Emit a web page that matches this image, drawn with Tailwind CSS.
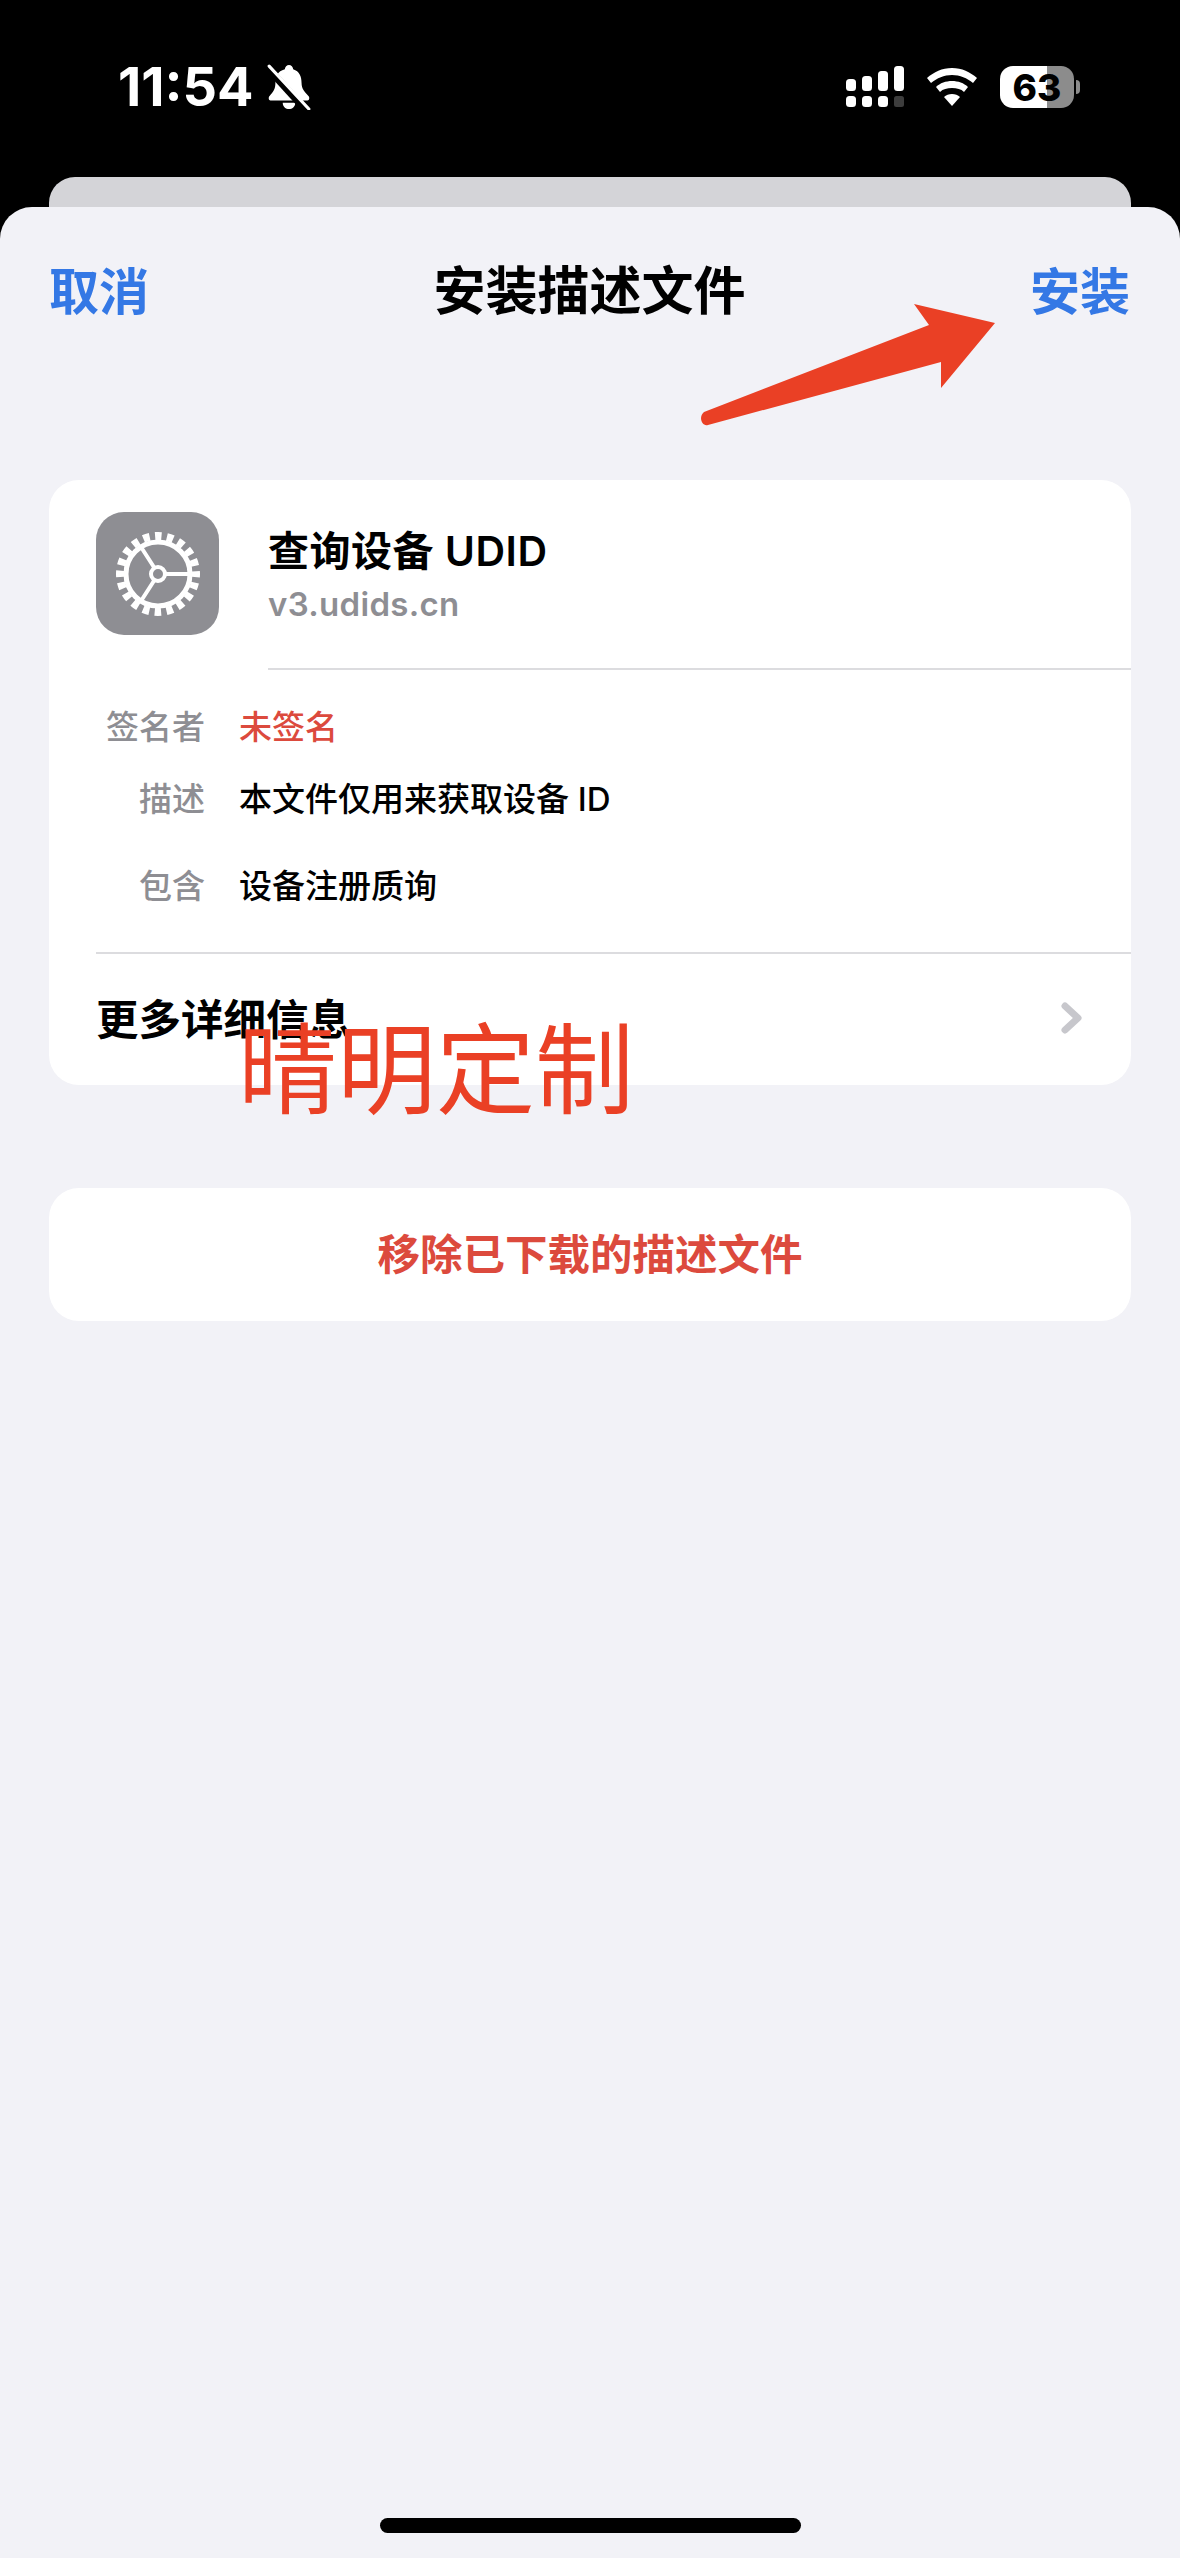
<!DOCTYPE html>
<html lang="zh">
<head>
  <meta charset="UTF-8">
  <title>安装描述文件</title>
  <script src="https://cdn.jsdelivr.net/npm/@tailwindcss/browser@4"></script>
</head>
<body class="bg-black font-['Inter','Noto_Sans_CJK_SC',sans-serif]">
  <div class="relative flex flex-col h-[2558px] w-[1180px] overflow-hidden">

    <!-- status bar -->
    <div class="h-[177px] shrink-0 flex items-start justify-between pt-[62px] pl-[118px] pr-[98px] text-white">
      <div class="flex items-center gap-[13px] h-[50px]">
        <span class="font-['Inter'] font-bold text-[54px] leading-none">11:54</span>
        <svg class="w-[44px] h-[46px]" viewBox="0 0 42 44">
          <path fill="#fff" d="M21 1c2 0 4 2 4 4 6 2 8 7 8 13 0 6 3 9 7 13 1 2 0 4-2 4H4c-2 0-3-2-2-4 4-4 6-7 6-13 0-6 2-11 9-13 0-2 2-4 4-4zM15 37h12c0 4-3 6-6 6s-6-2-6-6z"/>
          <path stroke="#000" stroke-width="7" d="M-1 2l40 44"/>
          <path stroke="#fff" stroke-width="3" stroke-linecap="round" d="M2 2l38 41"/>
        </svg>
      </div>
      <div class="flex items-center gap-[23px] h-[50px] mr-[2px]">
        <svg class="w-[58px] h-[42px]" viewBox="0 0 58 42" fill="#fff">
          <rect x="0" y="13" width="10" height="12" rx="3.5"/>
          <rect x="16" y="10" width="10" height="15" rx="3.5"/>
          <rect x="32" y="5" width="10" height="20" rx="3.5"/>
          <rect x="48" y="0" width="10" height="25" rx="3.5"/>
          <rect x="0" y="30" width="10" height="11" rx="3.5"/>
          <rect x="16" y="30" width="10" height="11" rx="3.5"/>
          <rect x="32" y="30" width="10" height="11" rx="3.5"/>
          <rect x="48" y="30" width="10" height="11" rx="2.5" fill="#3d3d3d"/>
        </svg>
        <svg class="w-[50px] h-[38px]" viewBox="0 0 50 38" fill="#fff">
          <path d="M25 0c10 0 18 4 25 10l-4 5C40 10 33 7 25 7S10 10 4 15l-4-5C7 4 15 0 25 0z"/>
          <path d="M25 13c6 0 12 2 16 6l-4 5c-3-3-7-4-12-4s-9 1-12 4l-4-5c4-4 10-6 16-6z"/>
          <path d="M25 26c3 0 6 1 8 3l-8 9-8-9c2-2 5-3 8-3z"/>
        </svg>
        <div class="flex items-center">
          <div class="w-[74px] h-[42px] rounded-[13px] flex items-center justify-center bg-[linear-gradient(90deg,#fff_64%,#8c8c8c_64%)] text-black font-extrabold text-[37px] leading-none font-['Inter']">63</div>
          <div class="ml-[2px] w-[4px] h-[14px] rounded-r-full bg-[#8c8c8c]"></div>
        </div>
      </div>
    </div>

    <!-- sheet behind -->
    <div class="h-[30px] shrink-0 mx-[49px] rounded-t-[26px] bg-[#d4d4d8]"></div>

    <!-- main sheet -->
    <div class="flex-1 rounded-t-[32px] bg-[#f2f2f7] px-[49px] flex flex-col">
      <div class="h-[273px] shrink-0 flex items-start justify-between pt-[60px] text-[50px] leading-[50px] pr-[1px]">
        <span class="text-[#3478e5] font-semibold">取消</span>
        <span class="text-black font-semibold text-[52px]">安装描述文件</span>
        <span class="text-[#3478e5] font-semibold">安装</span>
      </div>

      <div class="bg-white rounded-[30px] h-[605px] shrink-0 flex flex-col overflow-hidden">
        <div class="flex pl-[47px] pt-[32px] h-[190px] shrink-0">
          <div class="w-[123px] h-[123px] rounded-[28px] bg-[#8e8e93] flex items-center justify-center shrink-0">
            <svg class="w-[86px] h-[86px]" viewBox="0 0 86 86" fill="none" stroke="#fff">
              <circle cx="43" cy="43" r="32" stroke-width="5"/>
              <circle cx="43" cy="43" r="38" stroke-width="8" stroke-dasharray="6.500 5.438" stroke-dashoffset="3.250"/>
              <circle cx="43" cy="43" r="7" stroke-width="4"/>
              <path stroke-width="4" d="M50 43h24M39.500 37 26 16M39.500 49 26 70"/>
            </svg>
          </div>
          <div class="ml-[49px] flex-1 border-b-2 border-[#dcdcdf]">
            <div class="text-[41px] leading-[46px] tracking-[0.5px] font-semibold text-black mt-[16px]">查询设备 UDID</div>
            <div class="text-[33px] leading-[40px] tracking-[0.3px] font-semibold text-[#8e8e93] mt-[10px]">v3.udids.cn</div>
          </div>
        </div>

        <div class="grid grid-cols-[141px_1fr] content-start text-[33px] leading-[40px] font-medium pt-[37px] h-[282px] shrink-0 ml-[15px]">
          <span class="text-right text-[#8e8e93]">签名者</span>
          <span class="pl-[34px] text-[#dc4a3d]">未签名</span>
          <span class="text-right text-[#8e8e93] mt-[32px]">描述</span>
          <span class="pl-[34px] text-black mt-[32px]">本文件仅用来获取设备 ID</span>
          <span class="text-right text-[#8e8e93] mt-[47px]">包含</span>
          <span class="pl-[34px] text-black mt-[47px]">设备注册质询</span>
        </div>

        <div class="ml-[47px] border-t-2 border-[#dcdcdf] flex-1 flex items-start justify-between pt-[42px] pr-[48px]">
          <span class="text-[42.500px] leading-[48px] font-semibold text-black">更多详细信息</span>
          <svg class="w-[22px] h-[32px] mt-[6px]" viewBox="0 0 22 32" fill="none" stroke="#c7c7cc" stroke-width="7" stroke-linecap="round" stroke-linejoin="round"><path d="M4 4l13 12L4 28"/></svg>
        </div>
      </div>

      <div class="mt-[103px] h-[133px] shrink-0 rounded-[30px] bg-white flex items-center justify-center text-[#dc4a3d] text-[42.500px] font-semibold">移除已下载的描述文件</div>

      <div class="mt-auto mb-[25px] mx-auto w-[421px] h-[15px] rounded-full bg-black"></div>
    </div>

    <!-- annotations drawn on top of the screenshot -->
    <svg class="absolute left-0 top-0 w-[1180px] h-[440px]" viewBox="0 0 1180 440">
      <path fill="#ea4025" d="M914 304 995 323 941 388 941 362 708 425C702 427 698 417 704 412L929 325Z"/>
    </svg>
    <div class="absolute left-[238px] top-[1005px] text-[99px] leading-[116px] text-[#ea4025] font-['Noto_Sans_CJK_SC'] font-normal">晴明定制</div>
  </div>
</body>
</html>
